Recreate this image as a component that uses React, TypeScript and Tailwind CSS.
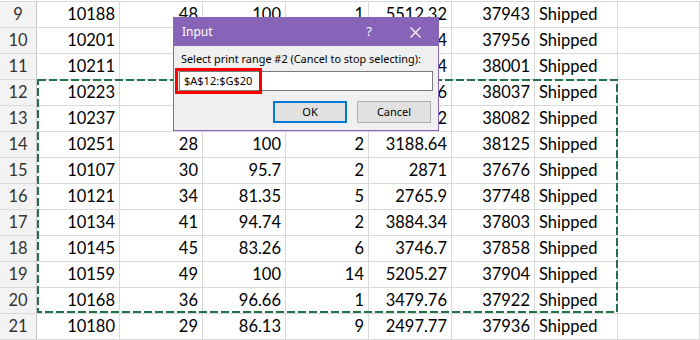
import { FC } from "react";

type Row = { n: number; cells: string[] };

const ROWS: Row[] = [
  { n: 9, cells: ["10188", "48", "100", "1", "5512.32", "37943", "Shipped"] },
  { n: 10, cells: ["10201", "22", "98.57", "2", "2168.54", "37956", "Shipped"] },
  { n: 11, cells: ["10211", "41", "100", "14", "4708.44", "38001", "Shipped"] },
  { n: 12, cells: ["10223", "37", "100", "1", "3965.66", "38037", "Shipped"] },
  { n: 13, cells: ["10237", "23", "100", "7", "2333.12", "38082", "Shipped"] },
  { n: 14, cells: ["10251", "28", "100", "2", "3188.64", "38125", "Shipped"] },
  { n: 15, cells: ["10107", "30", "95.7", "2", "2871", "37676", "Shipped"] },
  { n: 16, cells: ["10121", "34", "81.35", "5", "2765.9", "37748", "Shipped"] },
  { n: 17, cells: ["10134", "41", "94.74", "2", "3884.34", "37803", "Shipped"] },
  { n: 18, cells: ["10145", "45", "83.26", "6", "3746.7", "37858", "Shipped"] },
  { n: 19, cells: ["10159", "49", "100", "14", "5205.27", "37904", "Shipped"] },
  { n: 20, cells: ["10168", "36", "96.66", "1", "3479.76", "37922", "Shipped"] },
  { n: 21, cells: ["10180", "29", "86.13", "9", "2497.77", "37936", "Shipped"] },
];

const InputDialog: FC = () => {
  return (
    <div className="absolute left-[173px] top-[17px] flex w-[266px] flex-col border border-[#8764b8] bg-[#f0f0f0] font-['Noto_Sans',sans-serif] text-[#000]">
      {/* Title bar */}
      <div className="flex h-[28px] items-center bg-[#8764b8] pl-[8px] text-[12px] text-white">
        <span className="flex-1">Input</span>
        <span className="w-[46px] text-center text-[13px]">?</span>
        <span className="flex w-[46px] items-center justify-center">
          <svg width="11" height="11" viewBox="0 0 11 11">
            <path d="M0.5 0.5L10.5 10.5M10.5 0.5L0.5 10.5" stroke="white" strokeWidth="1.2" />
          </svg>
        </span>
      </div>
      {/* Body */}
      <div className="flex flex-col px-[5px] pb-[7px] pt-[5px]">
        <p className="whitespace-nowrap pl-[2px] text-[10.9px] leading-[16px]">
          Select print range #2 (Cancel to stop selecting):
        </p>
        <div className="relative mt-[4px] flex h-[20px] items-center border border-[#7a7a7a] bg-white pl-[4px] text-[11px]">
          $A$12:$G$20
          {/* Red annotation */}
          <div className="absolute left-[-5px] top-[-4px] h-[26px] w-[87px] border-[3px] border-[#ff0000]" />
        </div>
        <div className="mt-[10px] flex justify-end gap-[10px] pr-[2px] text-[11px]">
          <button className="flex h-[22px] w-[74px] items-center justify-center border-2 border-[#0078d7] bg-[#e1e1e1]">
            OK
          </button>
          <button className="flex h-[22px] w-[74px] items-center justify-center border border-[#adadad] bg-[#e1e1e1]">
            Cancel
          </button>
        </div>
      </div>
    </div>
  );
};

const App: FC = () => {
  return (
    <div className="relative h-[340px] w-[700px] overflow-hidden bg-white font-['Lato',sans-serif] text-[16.5px] text-[#000]">
      <div className="pt-px">
        <div className="flex flex-col border-t border-[#d9d9d9]">
          {ROWS.map((row) => (
            <div key={row.n} className="flex h-[26px] border-b border-[#d9d9d9]">
              <div className="flex w-[37px] items-center justify-center border-r border-[#c6c6c6] bg-[#f3f3f3] text-[#333]">
                {row.n}
              </div>
              {row.cells.map((c, i) => (
                <div
                  key={i}
                  className={
                    i === 6
                      ? "flex w-[83px] items-center border-r border-[#d9d9d9] pl-[4px]"
                      : "flex w-[83px] items-center justify-end border-r border-[#d9d9d9] pr-[4px]"
                  }
                >
                  {c}
                </div>
              ))}
              <div className="flex-1 border-r border-[#d9d9d9]" />
            </div>
          ))}
        </div>
      </div>

      {/* Marching-ants print range */}
      <svg className="pointer-events-none absolute left-0 top-0" width="700" height="340">
        <rect
          x="38"
          y="80"
          width="579"
          height="232"
          fill="none"
          stroke="#217346"
          strokeWidth="2"
          strokeDasharray="8 3"
        />
      </svg>

      <InputDialog />
    </div>
  );
};

export default App;
